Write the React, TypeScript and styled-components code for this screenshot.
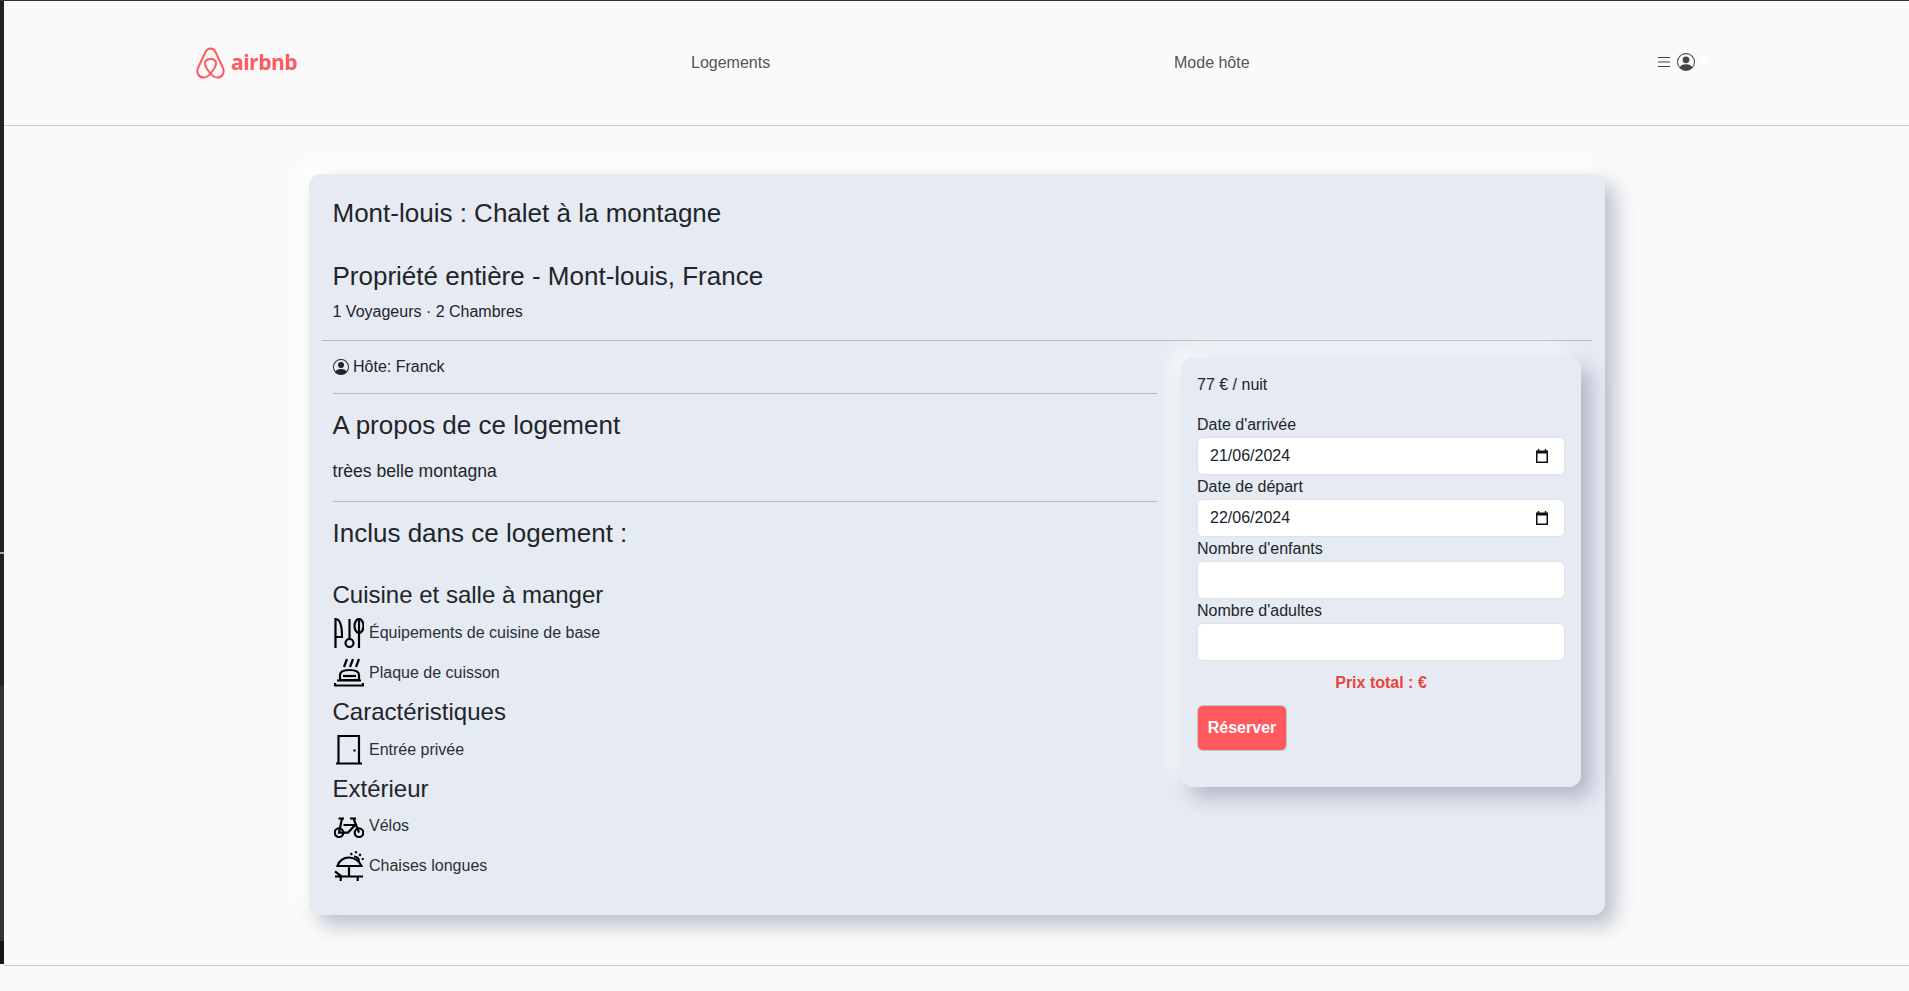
import styled, { createGlobalStyle } from 'styled-components'
import { BsList, BsPersonCircle } from 'react-icons/bs'

const GlobalStyle = createGlobalStyle`
  html, body {
    margin: 0;
    padding: 0;
    background: #fafafa;
    color: #212529;
    font-family: "Liberation Sans", Arial, sans-serif;
    font-size: 16px;
    line-height: 24px;
  }
  * {
    box-sizing: border-box;
  }
`

const Screen = styled.div`
  display: flex;
  min-height: 991px;
  border-top: 1px solid #333;
`

const WindowEdge = styled.div`
  width: 4px;
  height: 963px;
  flex-shrink: 0;
  background: linear-gradient(#222 0 551px, #aaa 551px 553px, #222 553px 685px, #333 685px 940px, #151515 940px);
`

const Page = styled.div`
  flex: 1;
  min-width: 0;
`

const Header = styled.header`
  height: 125px;
  border-bottom: 1px solid #ccc;
  display: grid;
  grid-template-columns: 495px 483px 481px auto;
  align-items: center;
  padding-left: 192px;
`

const Logo = styled.div`
  display: flex;
  align-items: center;
  gap: 6px;
`

const Wordmark = styled.span`
  margin-bottom: 3px;
  color: #ff5a5f;
  font-family: "Open Sans", sans-serif;
  font-weight: 700;
  font-size: 21px;
  letter-spacing: -0.5px;
  line-height: 32px;
`

const NavLink = styled.a`
  color: #555;
  line-height: 24px;
`

const UserMenu = styled.div`
  display: flex;
  align-items: center;
  gap: 4px;
  margin-bottom: 2px;
  color: #444;
`

const Caret = styled.span`
  width: 0;
  height: 0;
  margin-left: 1px;
  border-top: 5px solid #fff;
  border-left: 4px solid transparent;
  border-right: 4px solid transparent;
`

const Card = styled.main`
  width: 1296px;
  margin: 48px 0 50px 305px;
  height: 741px;
  padding: 0 13px;
  background: #e6eaf2;
  border-radius: 12px;
  box-shadow: 10px 10px 20px rgba(110, 118, 150, 0.45), -10px -10px 20px #fff;
`

const TitleBlock = styled.div`
  padding: 22px 10.5px 17px;
  border-bottom: 1px solid #b4b8c0;
`

const Title = styled.h3`
  margin: 0 0 29px;
  font-size: 26px;
  font-weight: 400;
  line-height: 34px;
`

const Subtitle = styled(Title)`
  margin-bottom: 6px;
`

const Stay = styled.div`
  position: relative;
  top: 1px;
`

const Columns = styled.div`
  display: flex;
  align-items: flex-start;
  padding-left: 10.5px;
`

const Details = styled.section`
  width: 824.5px;
`

const Host = styled.div`
  display: flex;
  align-items: center;
  gap: 4.5px;
  height: 53px;
  border-bottom: 1px solid #b4b8c0;
`

const SectionTitle = styled.h4`
  margin: 0;
  font-size: 26px;
  font-weight: 400;
  line-height: 32px;
`

const Description = styled.p`
  margin: 18px 0 0;
  padding-bottom: 18px;
  font-size: 17.6px;
  border-bottom: 1px solid #b4b8c0;
`

const AboutBlock = styled.div`
  padding-top: 15px;
`

const IncludedBlock = styled.div`
  padding-top: 15px;
`

const CategoryTitle = styled.h5<{ $top?: number; $bottom?: number }>`
  margin: ${(props) => props.$top ?? 4}px 0 ${(props) => props.$bottom ?? 3}px;
  font-size: 24px;
  font-weight: 400;
  line-height: 30px;
`

const Amenity = styled.div`
  display: flex;
  align-items: center;
  gap: 5.5px;
  height: 40px;
  margin-left: 1px;
  color: #2b3035;
`

const Booking = styled.aside`
  width: 400px;
  height: 429px;
  margin: 17px 0 0 24px;
  padding: 15px 16px 0;
  background: #e6eaf2;
  border-radius: 12px;
  box-shadow: 10px 10px 20px rgba(110, 118, 150, 0.45), -10px -10px 20px rgba(255, 255, 255, 0.7);
`

const Price = styled.div`
  margin-bottom: 16px;
`

const Label = styled.label`
  display: block;
`

const DateWrap = styled.div`
  position: relative;
`

const CalendarMark = styled.svg`
  position: absolute;
  top: 12px;
  right: 17px;
  width: 12px;
  height: 14px;
  pointer-events: none;
`

const Field = styled.input`
  display: block;
  width: 100%;
  height: 38px;
  padding: 6px 12px;
  border: 1px solid #dee2e6;
  border-radius: 6px;
  background: #fff;
  color: #212529;
  font: inherit;
`

const Total = styled.div`
  margin-top: 10px;
  text-align: center;
  color: #e8453c;
  font-weight: 700;
`

const ReserveButton = styled.button`
  display: block;
  width: 90px;
  height: 46px;
  margin-top: 10px;
  padding: 0;
  border: 1px solid #c8c8cc;
  border-radius: 6px;
  background: #ff5a5f;
  color: #fff;
  font: inherit;
  font-weight: 700;
`

const FooterLine = styled.div`
  border-top: 1px solid #ccc;
  height: 25px;
`

const LineIcon = styled.svg`
  width: 30px;
  height: 30px;
  flex-shrink: 0;
  fill: none;
  stroke: #000;
  stroke-width: 2.2;
`

function AirbnbMark() {
  return (
    <svg width="29" height="32" viewBox="0 0 29 32" fill="none" stroke="#ff5a5f" strokeWidth="2">
      <path d="M14.5 1.5C12 1.5 10.5 3 9.5 5L2 21C0 26 3 30.5 7.5 30.5C10 30.5 12.5 29 14.5 26.5C16.5 29 19 30.5 21.5 30.5C26 30.5 29 26 27 21L19.5 5C18.5 3 17 1.5 14.5 1.5Z" />
      <path d="M14.5 26.5C11 22.5 9 19 9 16.5C9 13.5 11.5 12 14.5 12C17.5 12 20 13.5 20 16.5C20 19 18 22.5 14.5 26.5Z" />
    </svg>
  )
}

function CalendarIcon() {
  return (
    <CalendarMark viewBox="0 0 12 14">
      <path d="M2.5 0V2M9.5 0V2" stroke="#111" strokeWidth="1.4" />
      <path d="M0 1.5H12V14H0Z M1.5 4.5V12.5H10.5V4.5Z" fill="#111" fillRule="evenodd" />
    </CalendarMark>
  )
}

function CutleryIcon() {
  return (
    <LineIcon viewBox="0 0 30 30">
      <path d="M1.5 0V30M1.5 1C5 1 8 6 8 19H1.5" />
      <path d="M15.5 1V21" />
      <circle cx="15.5" cy="25" r="4" />
      <ellipse cx="25" cy="8" rx="4.5" ry="7" />
      <path d="M25 1V30" />
    </LineIcon>
  )
}

function CooktopIcon() {
  return (
    <LineIcon viewBox="0 0 30 30">
      <path d="M13 1L10 9M19 1L16 9M25 1L22 9" />
      <path d="M6 22V17C6 13 10 12 15.5 12C21 12 25 13 25 17V22Z" />
      <path d="M9 18H22" />
      <path d="M1 25V27.5H29V25M3 22.5H27" />
    </LineIcon>
  )
}

function DoorIcon() {
  return (
    <LineIcon viewBox="0 0 30 30">
      <path d="M4.5 28V1H25V28M2 28.5H28" />
      <path d="M20.5 14.5V16.5" />
    </LineIcon>
  )
}

function BikeIcon() {
  return (
    <LineIcon viewBox="0 0 30 30">
      <circle cx="5" cy="21.7" r="4.3" />
      <circle cx="25" cy="21.7" r="4.3" />
      <path d="M4.5 7.5H10M16 7.5H22M8 7.5L5 21.7H14L21 14H9.5M19.5 7.5L25 21.7" />
    </LineIcon>
  )
}

function LoungerIcon() {
  return (
    <LineIcon viewBox="0 0 30 30">
      <path d="M3.5 15C5 9.5 10 6.5 15 6.5C20 6.5 25 10 27.5 15Z" />
      <path d="M15 15V25.7M1 25.5H29M6.7 25.7V30M23.7 25.7V30M1 20.3L7.7 25.7" />
      <path d="M16.7 2L18 4M22 0.3V2.3M26.7 3L25.3 4.7M29.7 8H27.7M20 5.5C23 5.5 25.5 8 25 11" />
    </LineIcon>
  )
}

function App() {
  return (
    <>
      <GlobalStyle />
      <Screen>
        <WindowEdge />
        <Page>
          <Header>
            <Logo>
              <AirbnbMark />
              <Wordmark>airbnb</Wordmark>
            </Logo>
            <NavLink>Logements</NavLink>
            <NavLink>Mode hôte</NavLink>
            <UserMenu>
              <BsList size={18} />
              <BsPersonCircle size={18} />
              <Caret />
            </UserMenu>
          </Header>
          <Card>
            <TitleBlock>
              <Title>Mont-louis : Chalet à la montagne</Title>
              <Subtitle>Propriété entière - Mont-louis, France</Subtitle>
              <Stay>1 Voyageurs · 2 Chambres</Stay>
            </TitleBlock>
            <Columns>
              <Details>
                <Host>
                  <BsPersonCircle size={16} />
                  Hôte: Franck
                </Host>
                <AboutBlock>
                  <SectionTitle>A propos de ce logement</SectionTitle>
                  <Description>trèes belle montagna</Description>
                </AboutBlock>
                <IncludedBlock>
                  <SectionTitle>Inclus dans ce logement :</SectionTitle>
                  <CategoryTitle $top={31}>Cuisine et salle à manger</CategoryTitle>
                  <Amenity>
                    <CutleryIcon />
                    Équipements de cuisine de base
                  </Amenity>
                  <Amenity>
                    <CooktopIcon />
                    Plaque de cuisson
                  </Amenity>
                  <CategoryTitle>Caractéristiques</CategoryTitle>
                  <Amenity>
                    <DoorIcon />
                    Entrée privée
                  </Amenity>
                  <CategoryTitle $bottom={2}>Extérieur</CategoryTitle>
                  <Amenity>
                    <BikeIcon />
                    Vélos
                  </Amenity>
                  <Amenity>
                    <LoungerIcon />
                    Chaises longues
                  </Amenity>
                </IncludedBlock>
              </Details>
              <Booking>
                <Price>77 € / nuit</Price>
                <Label>Date d'arrivée</Label>
                <DateWrap>
                  <Field type="text" defaultValue="21/06/2024" />
                  <CalendarIcon />
                </DateWrap>
                <Label>Date de départ</Label>
                <DateWrap>
                  <Field type="text" defaultValue="22/06/2024" />
                  <CalendarIcon />
                </DateWrap>
                <Label>Nombre d'enfants</Label>
                <Field type="number" />
                <Label>Nombre d'adultes</Label>
                <Field type="number" />
                <Total>Prix total : €</Total>
                <ReserveButton>Réserver</ReserveButton>
              </Booking>
            </Columns>
          </Card>
          <FooterLine />
        </Page>
      </Screen>
    </>
  )
}

export default App
